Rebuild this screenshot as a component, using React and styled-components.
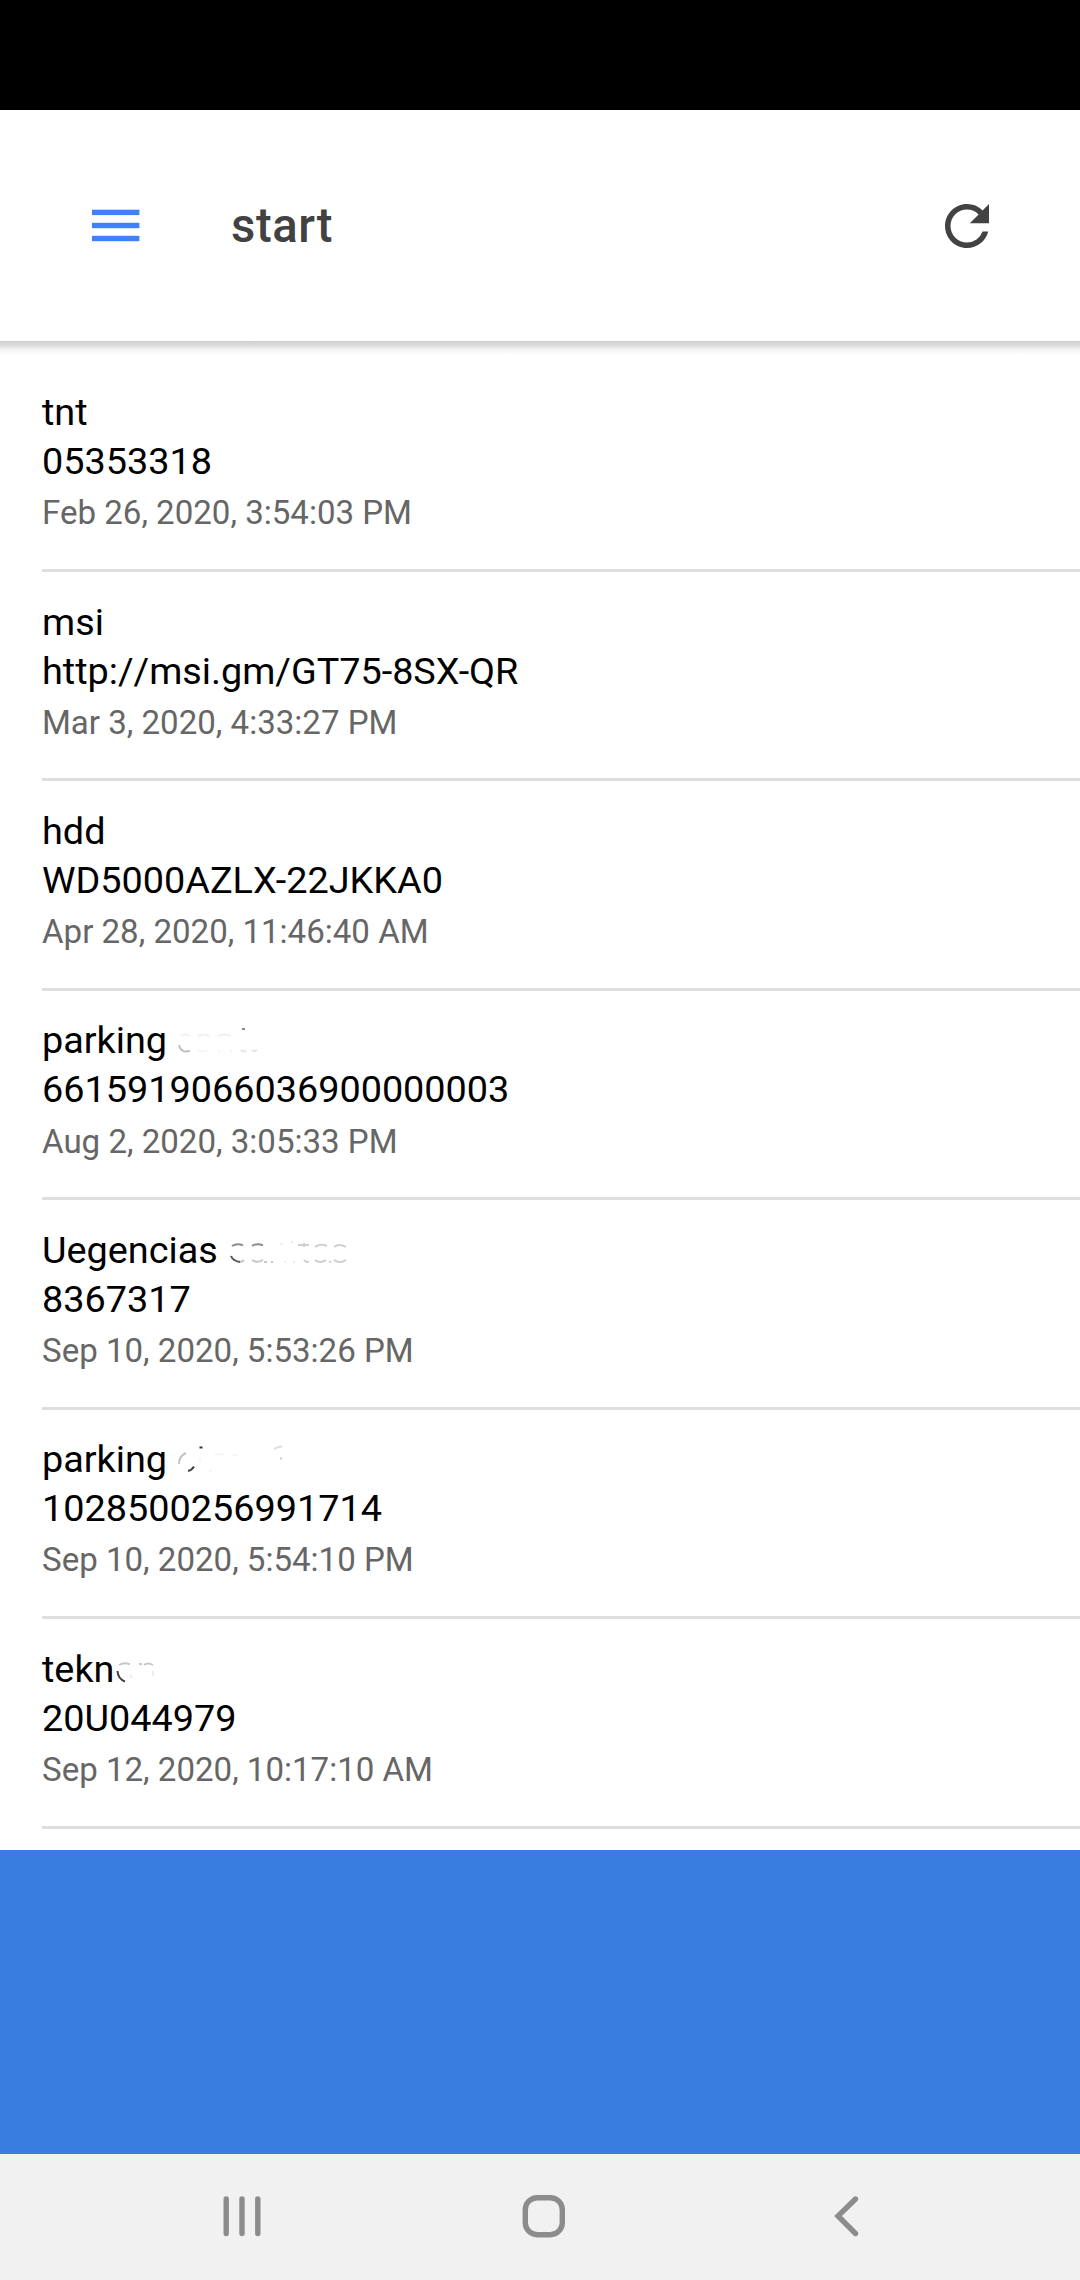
import React from 'react';
import styled, { createGlobalStyle } from 'styled-components';
import { MdRefresh } from 'react-icons/md';

const color = {
  primary: '#387ddf',
  menu: '#4080f8',
  title: '#424242',
  text: '#000',
  note: '#666',
  line: '#dedede',
  navBg: '#f1f1f1',
  navIcon: '#8c8c8c',
};

const GlobalStyle = createGlobalStyle`
  * {
    box-sizing: border-box;
  }
  body {
    margin: 0;
    background: #fff;
    font-family: Roboto, 'Liberation Sans', sans-serif;
  }
`;

const Screen = styled.div`
  display: flex;
  flex-direction: column;
  width: 1080px;
  height: 2280px;
  overflow: hidden;
`;

const StatusBar = styled.div`
  flex: none;
  height: 110px;
  background: #000;
`;

const Header = styled.header`
  flex: none;
  display: flex;
  align-items: center;
  height: 231px;
  padding: 0 80px 0 92px;
`;

const MenuIcon = styled.svg`
  width: 48px;
  height: 34px;
  fill: ${color.menu};
`;

const Title = styled.h1`
  flex: 1;
  margin: 0 0 0 91px;
  font-size: 47.25px;
  font-weight: 500;
  line-height: 56px;
  letter-spacing: 0.6px;
  color: ${color.title};
`;

const RefreshIcon = styled(MdRefresh)`
  width: 66px;
  height: 66px;
  margin-right: 0.5px;
  color: ${color.title};
`;

const HeaderShadow = styled.div`
  flex: none;
  height: 14px;
  background: linear-gradient(#cfcfcf, #dcdcdc 30%, #f4f4f4 65%, #fff);
`;

const List = styled.ul`
  flex: none;
  height: 1495px;
  margin: 0;
  padding: 7.5px 0 0 42px;
  list-style: none;
  overflow: hidden;
`;

const Item = styled.li`
  height: 209.45px;
  padding-top: 25.6px;
  border-bottom: 3px solid ${color.line};
`;

const ItemText = styled.div`
  display: flex;
  height: 49px;
  font-size: 37.8px;
  line-height: 49px;
  white-space: pre;
  color: ${color.text};
`;

const ItemDate = styled.div`
  margin-top: 2.2px;
  font-size: 33.07px;
  line-height: 49px;
  color: ${color.note};
`;

/* rubbed out end of a name */
const Smudge = styled.svg`
  width: 140px;
  height: 49px;
  fill: none;
  stroke-width: 2;
`;

const Footer = styled.div`
  flex: none;
  height: 304px;
  background: ${color.primary};
`;

const NavBar = styled.nav`
  flex: none;
  display: flex;
  height: 126px;
  padding: 41px 0 0 222px;
  background: ${color.navBg};
`;

const NavIcon = styled.svg`
  height: 44px;
  margin-right: ${(props) => props.$gap || 0}px;
  fill: none;
  stroke: ${color.navIcon};
  stroke-width: 5.4;
  stroke-linecap: round;
`;

const items = [
  { name: 'tnt', code: ['05353318'], date: 'Feb 26, 2020, 3:54:03 PM' },
  { name: 'msi', code: ['http:/', '/msi.gm/GT75-8SX-QR'], date: 'Mar 3, 2020, 4:33:27 PM' },
  { name: 'hdd', code: ['WD5000AZLX-22JKKA0'], date: 'Apr 28, 2020, 11:46:40 AM' },
  {
    name: 'parking',
    code: ['6615919066036900000003'],
    date: 'Aug 2, 2020, 3:05:33 PM',
    marks: [
      ['M12 29q1 5 5 6.3q3 .8 6-.6', '#c0c0c0'],
      ['M14 20q4-3 9 0M31 20q5-3 11 0M51 20q6-3 13 0', '#f0f0f0'],
      ['M31 34q5 3 10 0M51 35h2M63 35h2', '#f4f4f4'],
      ['M75 13h3', '#888'],
      ['M74 34q2 2 5 1M85 34q2 2 5 0', '#e4e4e4'],
    ],
  },
  {
    name: 'Uegencias',
    code: ['8367317'],
    date: 'Sep 10, 2020, 5:53:26 PM',
    marks: [
      ['M13 30q2 5 9 6', '#555'],
      ['M22 36q2 0 4-2', '#c4c4c4'],
      ['M14 20q5-3.4 11-.6M34 20q5-3.4 11-.6', '#8c8c8c'],
      ['M34 34q5 3.4 11 0M46 36h3M53 36h2', '#c8c8c8'],
      ['M62 18h2M73 16h2M66 36h2M75 36h2', '#ececec'],
      ['M80 19h11M86 17v4M97 21q5-4 12-1M116 21q5-4 12 0', '#cfcfcf'],
      ['M86 34q2 3 5 1.4M97 34q5 4 11 0M111 36h2M116 34q6 4 12 0', '#cfcfcf'],
    ],
  },
  {
    name: 'parking',
    code: ['1028500256991714'],
    date: 'Sep 10, 2020, 5:54:10 PM',
    marks: [
      ['M12 29q0-8 7-11', '#c4c4c4'],
      ['M21 36q4-1 6-4.5', '#444'],
      ['M32.5 12.5h3', '#333'],
      ['M33 24v4M42 36h3M48 20q5-2 9 0M66 20h4', '#f6f6f6'],
      ['M107 14q4-2.5 8-2.5M114 22v3', '#dcdcdc'],
    ],
  },
  {
    name: 'tekn',
    code: ['20U044979'],
    date: 'Sep 12, 2020, 10:17:10 AM',
    marks: [
      ['M3.5 26q.5 8 7.5 10.5', '#444'],
      ['M5 20q5-3 11-.6M25 19h3M30 20q4-3 9 0', '#c8c8c8'],
      ['M17 30v3M39 26v5', '#ececec'],
    ],
  },
];

const App = () => {
  return (
    <Screen>
      <GlobalStyle />
      <StatusBar />
      <Header>
        <MenuIcon viewBox="0 0 48 34">
          <rect y="0.7" width="47.4" height="5.4" />
          <rect y="13.8" width="47.4" height="5.4" />
          <rect y="26.8" width="47.4" height="5.4" />
        </MenuIcon>
        <Title>start</Title>
        <RefreshIcon />
      </Header>
      <HeaderShadow />
      <List>
        {items.map((item) => (
          <Item key={item.date}>
            <ItemText>
              {item.name}
              {item.marks && (
                <Smudge viewBox="0 0 140 49">
                  {item.marks.map(([d, stroke]) => (
                    <path key={d} d={d} stroke={stroke} />
                  ))}
                </Smudge>
              )}
            </ItemText>
            <ItemText>
              {item.code.map((part) => (
                <span key={part}>{part}</span>
              ))}
            </ItemText>
            <ItemDate>{item.date}</ItemDate>
          </Item>
        ))}
      </List>
      <Footer />
      <NavBar>
        <NavIcon width="40" viewBox="0 0 40 44" $gap={260}>
          <path d="M4.2 4v34.5M20 4v34.5M35.8 4v34.5" />
        </NavIcon>
        <NavIcon width="44" viewBox="0 0 44 44" $gap={267}>
          <rect x="3.3" y="2.7" width="37" height="37" rx="12" />
        </NavIcon>
        <NavIcon width="26" viewBox="0 0 26 44">
          <path d="M22.5 4L5 21L22.5 38.5" />
        </NavIcon>
      </NavBar>
    </Screen>
  );
};

export default App;
